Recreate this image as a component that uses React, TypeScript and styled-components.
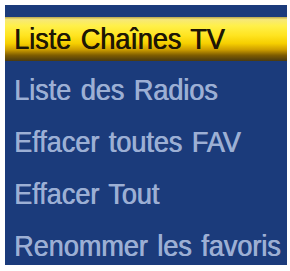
import React from "react";
import styled, { createGlobalStyle } from "styled-components";

const Global = createGlobalStyle`
  html, body { margin: 0; padding: 0; background: #ffffff; }
  body { font-family: "Liberation Sans", Arial, sans-serif; }
`;

const Panel = styled.div`
  margin: 5px 3px 0 5px;
  width: 282px;
  height: 260px;
  background: #1b3b7b;
  padding-top: 12px;
  box-sizing: border-box;
  overflow: hidden;
  display: flex;
  flex-direction: column;
`;

const Item = styled.div<{ $selected?: boolean }>`
  flex: none;
  height: ${(p) => (p.$selected ? 44 : 52)}px;
  line-height: ${(p) => (p.$selected ? 44 : 52)}px;
  margin-bottom: ${(p) => (p.$selected ? 3 : 0)}px;
  padding-left: 9px;
  font-size: 27px;
  white-space: nowrap;
  color: ${(p) => (p.$selected ? "#1e1605" : "#9cafd4")};
  text-shadow: ${(p) =>
    p.$selected ? "0.6px 0 0 #1e1605" : "0.6px 0 0 #9cafd4"};
  background: ${(p) =>
    p.$selected
      ? "linear-gradient(to bottom, #b8a650 0%, #f6e878 6%, #fff04a 20%, #ffe420 42%, #f6cf00 60%, #cf9f00 74%, #7e5c00 87%, #4a3a10 100%)"
      : "transparent"};
`;

const Label = styled.span`
  display: inline-block;
  transform: scale(1, 1.1);
  transform-origin: left center;
  word-spacing: 2px;
`;

const items = [
  "Liste Chaînes TV",
  "Liste des Radios",
  "Effacer toutes FAV",
  "Effacer Tout",
  "Renommer les favoris",
];

export default function App() {
  return (
    <>
      <Global />
      <Panel>
        {items.map((t, i) => (
          <Item key={t} $selected={i === 0}>
            <Label>{t}</Label>
          </Item>
        ))}
      </Panel>
    </>
  );
}
